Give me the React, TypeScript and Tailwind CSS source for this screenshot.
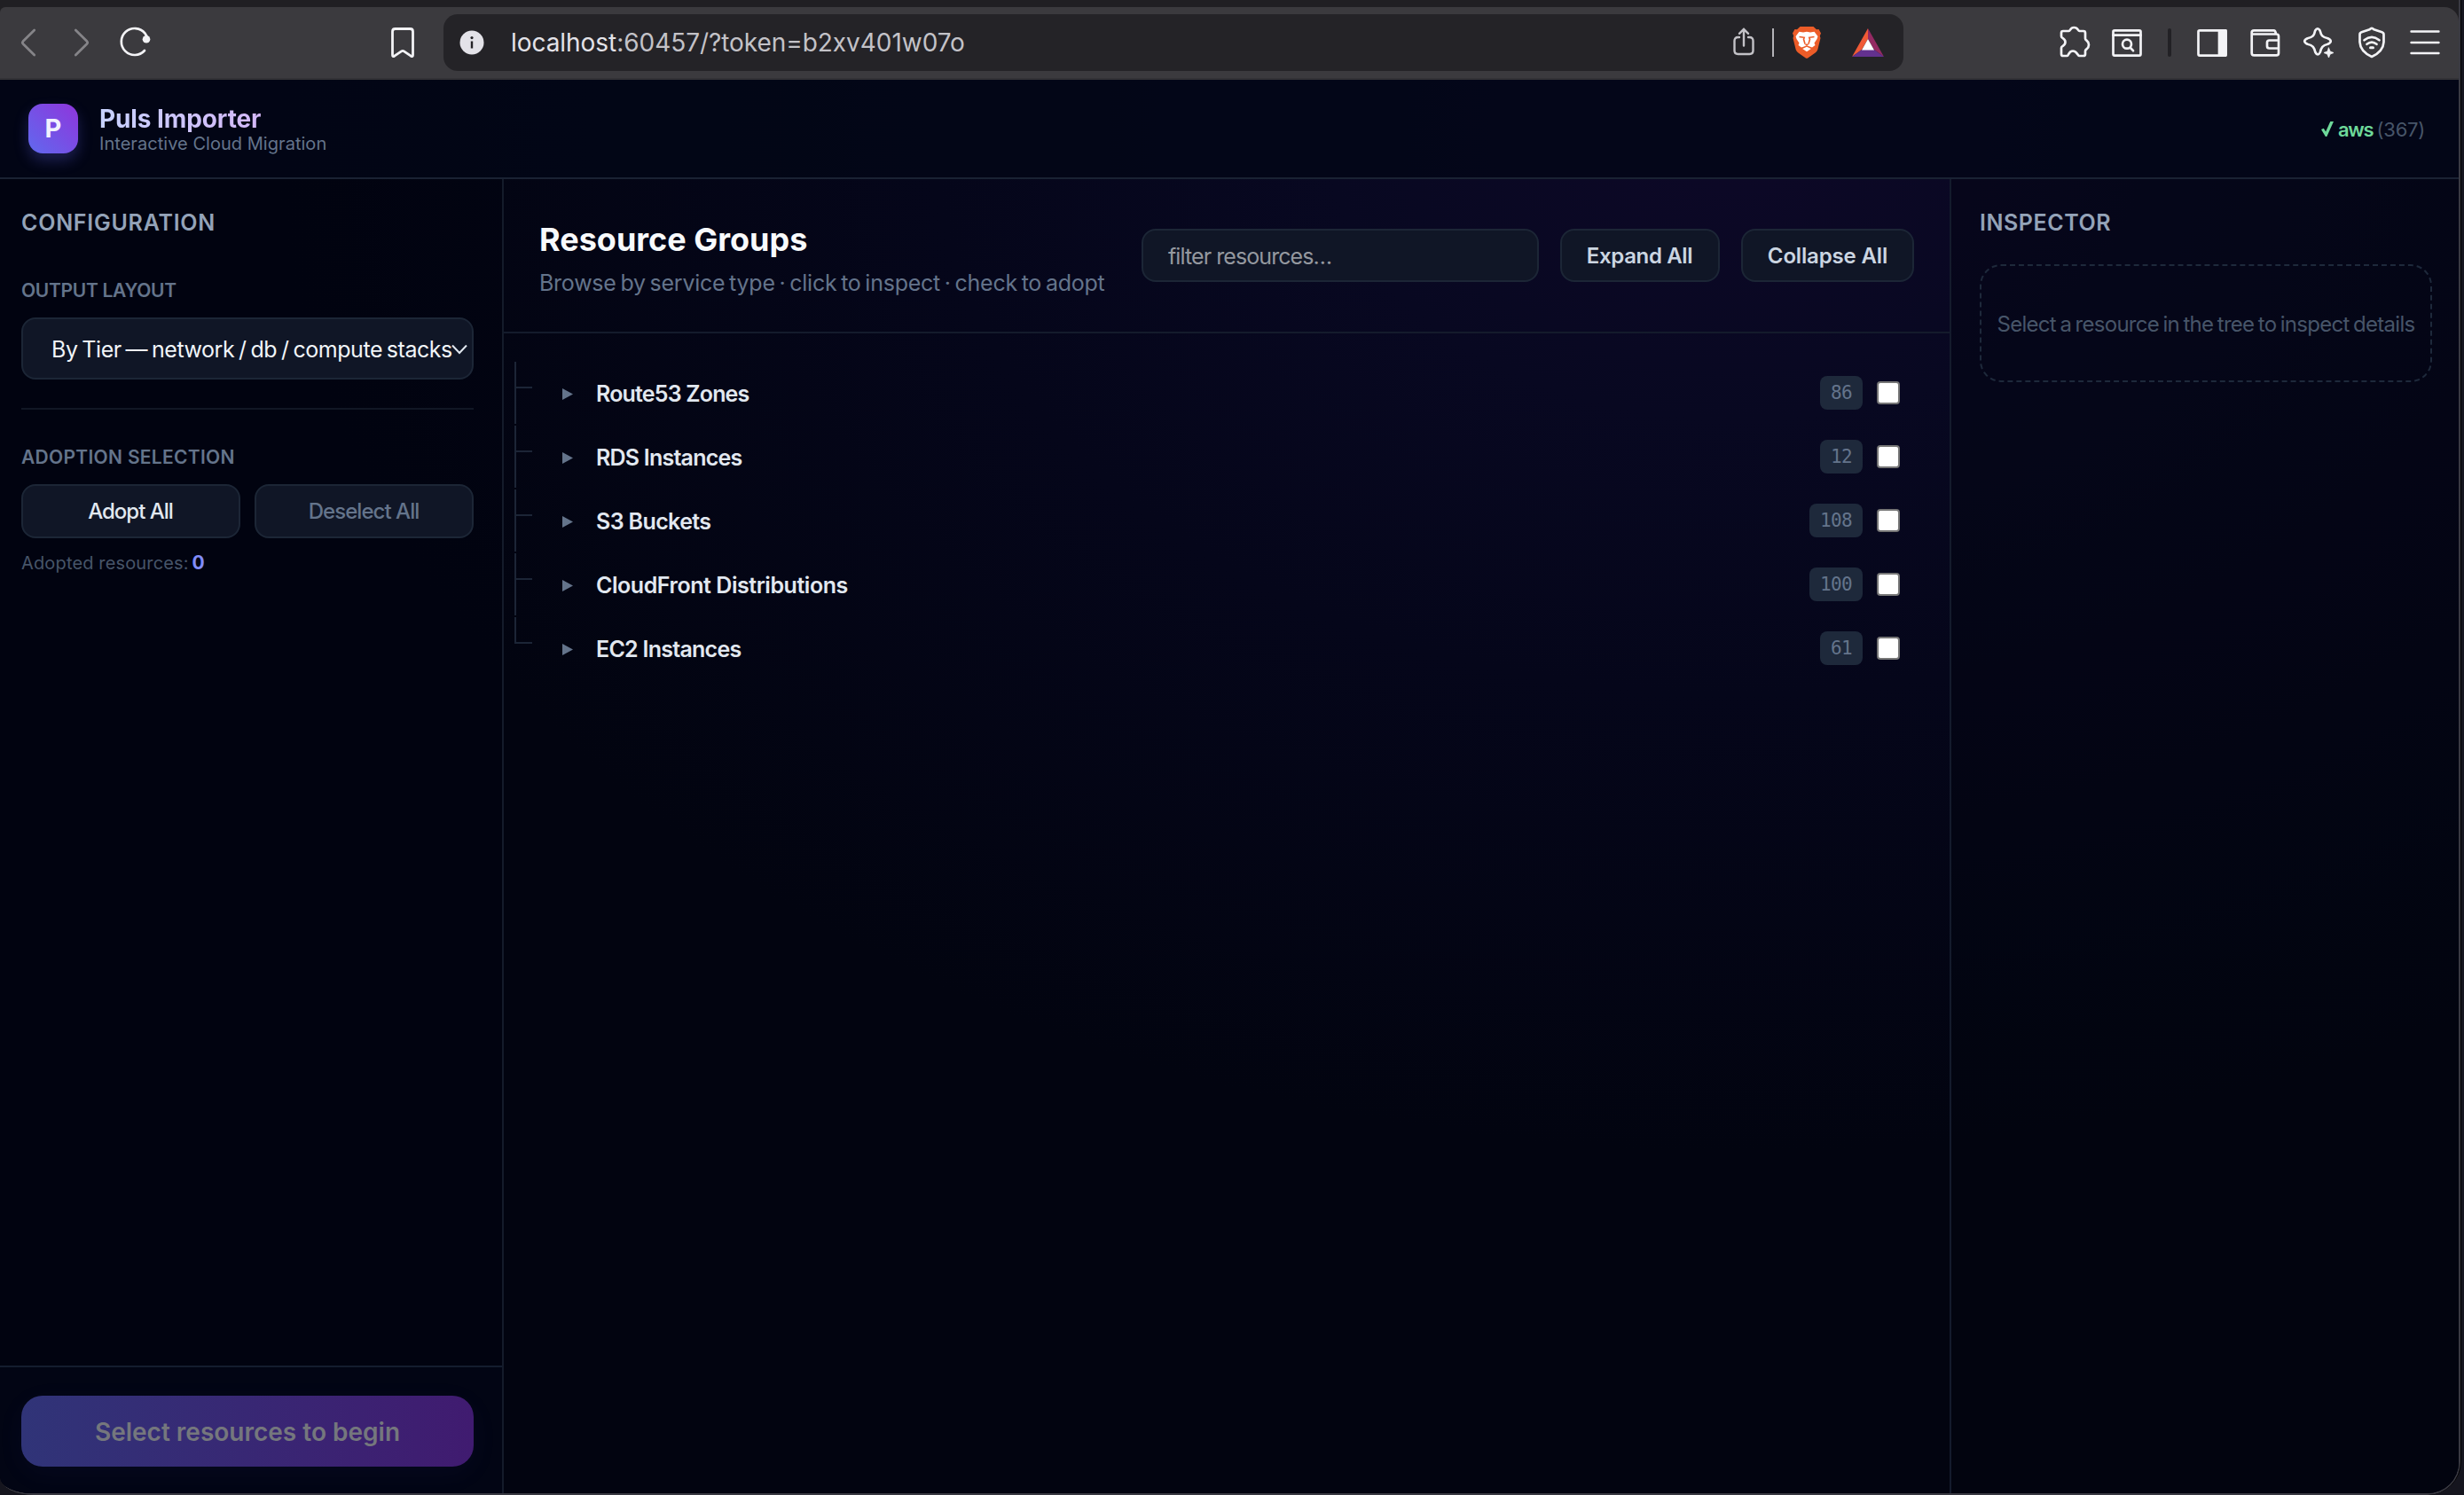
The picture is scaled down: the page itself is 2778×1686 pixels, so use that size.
import type { ReactNode } from "react";

const groups = [
  { name: "Route53 Zones", count: 86, tracking: "tracking-[-0.82px]" },
  { name: "RDS Instances", count: 12, tracking: "tracking-[-0.78px]" },
  { name: "S3 Buckets", count: 108, tracking: "tracking-[-0.62px]" },
  { name: "CloudFront Distributions", count: 100, tracking: "tracking-[-0.45px]" },
  { name: "EC2 Instances", count: 61, tracking: "tracking-[-0.74px]" },
];

function Icon({ className = "", children }: { className?: string; children: ReactNode }) {
  return (
    <svg
      viewBox="0 0 38 38"
      className={`size-[38px] shrink-0 ${className}`}
      fill="none"
      stroke="#f3f3f6"
      strokeWidth="2.7"
      strokeLinecap="round"
      strokeLinejoin="round"
    >
      {children}
    </svg>
  );
}

function BraveLion() {
  return (
    <svg viewBox="0 0 32 36" className="ml-[21px] h-9 w-8 shrink-0">
      <path d="M8.500 0H23.500L27 3.200 29.500 3 32 7.500 30.800 10.500 31.500 13 28.300 26Q27.600 28 26 29.300L17.500 35.300Q16 36.300 14.500 35.300L6 29.300Q4.400 28 3.700 26L.5 13 1.200 10.500 0 7.500 2.500 3 5 3.200Z" fill="#ec5c28" />
      <path d="M7.500 5.800 12 6.500 16 5.800 20 6.500 24.500 5.800 28.500 11 27.500 14 24.500 18.500 25.500 21 22 23.500 16 21.300 10 23.500 6.500 21 7.500 18.500 4.500 14 3.500 11Z" fill="#fff" />
      <path d="M16 22.700 20.800 25 16 28.300 11.200 25Z" fill="#fff" />
      <path d="M7.500 11.500 13.200 12.300 12.500 14.300 14 19.500M24.500 11.500 18.800 12.300 19.500 14.300 18 19.500" fill="none" stroke="#ec5c28" strokeWidth="1.600" />
      <path d="M13 19.500H19L16 21.800Z" fill="#ec5c28" />
    </svg>
  );
}

function BrowserBar() {
  return (
    <div className="h-[82px] shrink-0 rounded-tl-[6px] rounded-tr-[16px] border-b-2 border-[#333236] bg-[#3b3a3e] flex items-center">
      <svg viewBox="0 0 20 34" className="ml-[22px] h-[34px] w-5 shrink-0" fill="none" stroke="#858488" strokeWidth="2.8" strokeLinecap="round" strokeLinejoin="round">
        <path d="M16.700 3 4 15.600q-1.300 1.400 0 2.800L16.700 31" />
      </svg>
      <svg viewBox="0 0 20 34" className="ml-10 h-[34px] w-5 shrink-0" fill="none" stroke="#858488" strokeWidth="2.8" strokeLinecap="round" strokeLinejoin="round">
        <path d="M3.300 3 16 15.600q1.300 1.400 0 2.800L3.300 31" />
      </svg>
      <Icon className="ml-8">
        <path d="M29 28A15 15 0 1 1 29.500 8.600L31.500 12" />
        <circle cx="31" cy="15.300" r="4.300" fill="#f3f3f6" stroke="none" />
      </Icon>
      <svg viewBox="0 0 30 38" className="ml-[267px] h-[38px] w-[30px] shrink-0" fill="none" stroke="#f3f3f6" strokeWidth="2.8" strokeLinejoin="round">
        <path d="M3.500 6.500q0-3 3-3h17q3 0 3 3V33q0 2.600-2.200 1.200L16.500 28.800q-1.500-1-3 0L5.700 34.200Q3.500 35.600 3.500 33Z" />
      </svg>
      <div className="ml-[31px] flex h-16 w-[1646px] shrink-0 items-center rounded-[16px] bg-[#242327] pr-[22px]">
        <svg viewBox="0 0 28 28" className="ml-[18px] size-7 shrink-0">
          <circle cx="14" cy="14" r="13.500" fill="#e3e2e8" />
          <circle cx="14" cy="8.600" r="1.600" fill="#242327" />
          <path d="M14 12.500V20.500" stroke="#242327" strokeWidth="2.400" />
        </svg>
        <div className="ml-[30px] text-[28px] leading-9 text-[#c3c2c7] tracking-[-0.05px]">
          <span className="text-[#e3e2e8]">localhost</span>:60457/?token=b2xv401w07o
        </div>
        <svg viewBox="0 0 28 38" className="ml-auto h-[38px] w-7 shrink-0" fill="none" stroke="#c3c2c7" strokeWidth="2.400" strokeLinecap="round" strokeLinejoin="round">
          <path d="M9 13H7.500q-4 0-4 4V28q0 4 4 4h13q4 0 4-4V17q0-4-4-4H19M14 22.500V3.800M9 8.800l5-5 5 5" />
        </svg>
        <div className="ml-[18px] h-8 w-0.5 bg-[#b4b3b8]" />
        <BraveLion />
        <svg viewBox="0 0 36 32" className="ml-[35px] h-8 w-9 shrink-0">
          <path d="M18 0 0 32 11 24 18 12Z" fill="#f05a36" />
          <path d="M18 0 36 32 25 24 18 12Z" fill="#942a63" />
          <path d="M0 32H36L25 24H11Z" fill="#63318f" />
          <path d="M18 12 25 24.500H11Z" fill="#fff" />
        </svg>
      </div>
      <Icon className="ml-[174px]">
        <path d="M4 8q0-2 2-2h6.500C14.500 6 13.500 2 18.300 2S22.500 6 24.500 6H29q2 0 2 2v6.500c0 2.500 4 2 4 7s-4 4.500-4 7V32q0 2-2 2h-4.500c-2.500 0-2.500-5.500-7.500-5.500S12.500 34 10.500 34H6q-2 0-2-2v-7c0-2.500 4.500-2 4.500-6.500S4 14.500 4 12Z" />
      </Icon>
      <Icon className="ml-[21px]">
        <rect x="3.500" y="5.300" width="31" height="28.300" rx="1.500" />
        <path d="M3.500 10.700h31M23 25l3 3.200" />
        <circle cx="19" cy="20.700" r="5" />
      </Icon>
      <div className="ml-[27px] h-8 w-1 rounded-sm bg-[#222125]" />
      <Icon className="ml-[27px]">
        <rect x="3.500" y="5.300" width="31" height="28.300" rx="1.500" />
        <path d="M27 5.300h7.500v28.300H27Z" fill="#f3f3f6" />
      </Icon>
      <Icon className="ml-[22px]">
        <path d="M3.700 9.500H31.500q2.500 0 2.500 2.500V31q0 2.300-2.500 2.300H6.200q-2.500 0-2.500-2.300V7.500q0-2.200 2.500-2.200H28.500q2 0 2.500 4M34 16.500H23.500q-2.500 0-2.500 2.500v4q0 2.500 2.500 2.500H34" />
      </Icon>
      <Icon className="ml-[22px]">
        <path d="M15.200 5.500q2.800-4.500 5.400 0C22 11 23 12.700 29.500 14.300q6.500 3 0 6.400C23.500 22 22 24.500 20.800 30q-2.600 5-5.400 0C14 24.500 13 22 6.500 20.700q-6.500-3.200 0-6.400C13 12.700 14 11 15.200 5.500Z" />
        <circle cx="30.500" cy="30.500" r="5.500" fill="#3b3a3e" stroke="none" />
        <path d="M30.500 25 32.100 28.900 36 30.500 32.100 32.100 30.500 36 28.900 32.100 25 30.500 28.900 28.900Z" fill="#f3f3f6" strokeWidth="0.800" />
      </Icon>
      <Icon className="ml-[22px]">
        <path d="M19 2.800Q20 2.800 21.500 4.200L30.500 7.300Q32.500 8 32.500 10V18.500Q32 29 19 35 6 29 5.500 18.500V10q0-2 2-2.700L16.500 4.200Q18 2.800 19 2.800Z" />
        <path d="M10.500 16.200q8.500-6.500 17 0M13.500 20.800q5.500-4.500 11 0" />
        <path d="M17.500 24.800h3" strokeWidth="3" />
      </Icon>
      <Icon className="ml-[22px]">
        <path d="M3.500 6.500h31M3.500 19h31M3.500 31h31" strokeWidth="2.400" />
      </Icon>
    </div>
  );
}

function AppHeader() {
  return (
    <header className="flex h-28 shrink-0 items-center border-b-2 border-[#1a2233] bg-[#020617]/80 pl-8 pr-[38px]">
      <div className="flex size-14 items-center justify-center rounded-[16px] bg-[linear-gradient(45deg,#6069ee,#8f35dc)] text-[29px] font-bold text-[#f1f2ff] shadow-[0_8px_16px_rgba(99,102,241,0.28)]">
        P
      </div>
      <div className="ml-6 pt-1">
        <h1 className="w-fit bg-[linear-gradient(90deg,#c7d2fe,#d4b8f8)] bg-clip-text text-[28px] font-bold leading-[30px] tracking-[-0.1px] text-transparent">
          Puls Importer
        </h1>
        <p className="text-[20px] leading-[27px] tracking-[0.04px] text-[#64748b]">Interactive Cloud Migration</p>
      </div>
      <div className="ml-auto flex items-center pt-px text-[22px] leading-7">
        <svg viewBox="0 0 15 18" className="mr-[5px] h-[17px] w-[14px]" fill="#6ed99a">
          <path d="M0 9.500 3 8.300 5.500 12.300 11 0H15L6.800 18H5.200Z" />
        </svg>
        <span className="font-semibold tracking-[-1.2px] text-[#6ed99a]">aws</span>
        <span className="ml-1 tracking-[-0.25px] text-[#475569]">(367)</span>
      </div>
    </header>
  );
}

const field = "rounded-[16px] border-2 border-[#1c2636] bg-[#101626]";

function Sidebar() {
  return (
    <aside className="flex w-[568px] shrink-0 flex-col border-r-2 border-[#141b2a] bg-[#020410]/60">
      <div className="flex-1 pl-6 pr-8 pt-8">
        <h2 className="text-[25px] font-semibold leading-[34px] tracking-[0.75px] text-[#94a3b8]">CONFIGURATION</h2>
        <h3 className="mt-[46px] text-[21px] font-semibold leading-7 tracking-[-0.3px] text-[#64748b]">OUTPUT LAYOUT</h3>
        <div className={`${field} mt-4 flex h-[70px] items-center pl-8 pt-[3px]`}>
          <span className="whitespace-nowrap text-[25px] tracking-[-0.46px] [word-spacing:-1.7px] text-[#f1f5f9]">
            By Tier — network / db / compute stacks
          </span>
          <svg viewBox="0 0 18 12" className="-ml-px h-3 w-[18px] shrink-0" fill="none" stroke="#e2e8f0" strokeWidth="2">
            <path d="M1 .5 9 9 17 .5" />
          </svg>
        </div>
        <div className="mt-8 h-0.5 bg-[#111725]" />
        <h3 className="mt-10 text-[21px] font-semibold leading-7 tracking-[0.3px] text-[#64748b]">ADOPTION SELECTION</h3>
        <div className="mt-4 grid grid-cols-2 gap-4">
          <button className={`${field} h-[61px] pr-px pt-px text-[24px] font-medium tracking-[-1px] text-[#e2e8f0]`}>Adopt All</button>
          <button className={`${field} h-[61px] pr-px pt-px text-[24px] font-medium tracking-[-0.95px] text-[#64748b]`}>Deselect All</button>
        </div>
        <p className="mt-[14px] text-[20px] leading-7 tracking-[0.15px] text-[#475569]">
          Adopted resources: <span className="-ml-0.5 text-[21px] font-bold text-[#818cf8]">0</span>
        </p>
      </div>
      <div className="border-t-2 border-[#141d2e] bg-[#020514] pb-[30px] pl-6 pr-8 pt-8">
        <button className="h-20 w-full rounded-[24px] bg-[linear-gradient(90deg,#303478,#401b70)] pt-0.5 text-[28px] font-semibold text-[#75777d] shadow-[0_8px_32px_rgba(99,102,241,0.05)]">
          Select resources to begin
        </button>
      </div>
    </aside>
  );
}

function ResourceTree() {
  return (
    <main className="flex min-w-0 flex-1 flex-col">
      <div className="flex h-[174px] shrink-0 items-center gap-6 border-b-2 border-[#141b2c] px-10">
        <div className="flex-1 whitespace-nowrap pt-[7px]">
          <h2 className="text-[36px] font-bold leading-[48px] text-[#f8fafc]">Resource Groups</h2>
          <p className="mt-[7px] text-[25px] leading-9 tracking-[-0.25px] [word-spacing:-2px] text-[#64748b]">
            Browse by service type · click to inspect · check to adopt
          </p>
        </div>
        <div className={`${field} flex h-[60px] w-[448px] items-center pl-7 pt-[3px] text-[25px] tracking-[-0.92px] text-[#94989f]`}>
          filter resources…
        </div>
        <button className={`${field} h-[60px] w-[180px] pr-px pt-0.5 text-[24px] font-semibold tracking-[-0.35px] text-[#cbd5e1]`}>
          Expand All
        </button>
        <button className={`${field} h-[60px] w-[195px] pt-0.5 text-[24px] font-semibold tracking-[-0.15px] text-[#cbd5e1]`}>
          Collapse All
        </button>
      </div>
      <ul className="flex flex-col gap-0.5 pl-3 pr-14 pt-8">
        {groups.map((g, i) => (
          <li key={g.name} className="flex h-[70px] items-center">
            <div className="flex w-5 flex-col self-stretch">
              <div className="h-[30px] border-b-2 border-l-2 border-[#1c2536]" />
              {i < groups.length - 1 && <div className="flex-1 border-l-2 border-[#1c2536]" />}
            </div>
            <svg viewBox="0 0 12 13" className="ml-[34px] mt-[3px] h-[13px] w-3" fill="#64748b">
              <path d="M0 0 12 6.500 0 13Z" />
            </svg>
            <span className={`ml-[26px] mt-0.5 text-[25px] font-semibold leading-9 text-[#e2e8f0] ${g.tracking}`}>{g.name}</span>
            <span className="ml-auto flex h-[38px] items-center rounded-[8px] bg-[#1e293b] px-3 pt-0.5 font-['DejaVu_Sans_Mono',monospace] text-[21px] tracking-[-0.64px] text-[#64748b]">
              {g.count}
            </span>
            <input type="checkbox" className="ml-4 size-[26px] appearance-none rounded-[4px] border-2 border-[#767676] bg-white" />
          </li>
        ))}
      </ul>
    </main>
  );
}

function Inspector() {
  return (
    <aside className="w-[574px] shrink-0 border-l-2 border-[#141b2c] bg-[#020410]/40 pl-8 pr-[30px] pt-8">
      <h2 className="text-[25px] font-semibold leading-[34px] tracking-[0.55px] text-[#94a3b8]">INSPECTOR</h2>
      <div className="mt-[30px] flex h-[133px] items-center justify-center whitespace-nowrap rounded-[24px] border-2 border-dashed border-[#1e293b] pt-0.5 text-[24px] tracking-[-0.72px] [word-spacing:-1.6px] text-[#475569]">
        Select a resource in the tree to inspect details
      </div>
    </aside>
  );
}

export default function App() {
  return (
    <div className="h-[1686px] w-[2778px] overflow-hidden bg-[#15151e] font-['Inter',sans-serif]">
      <div className="flex h-full w-[2775px] flex-col overflow-hidden border-r border-black bg-[#201f23] [border-bottom-left-radius:38px_20px] [border-bottom-right-radius:38px]">
        <div className="flex h-full flex-col overflow-hidden border-b-2 border-r-2 border-[#393942] bg-[#201f23] pt-2 [border-bottom-left-radius:38px_20px] [border-bottom-right-radius:37px]">
          <BrowserBar />
          <div className="flex min-h-0 flex-1 flex-col bg-[#020410] bg-[radial-gradient(ellipse_1650px_1150px_at_1960px_60px,#0d0827_0%,#080821_28%,#05061a_55%,#020410_100%)]">
            <AppHeader />
            <div className="flex min-h-0 flex-1">
              <Sidebar />
              <ResourceTree />
              <Inspector />
            </div>
          </div>
        </div>
      </div>
    </div>
  );
}
